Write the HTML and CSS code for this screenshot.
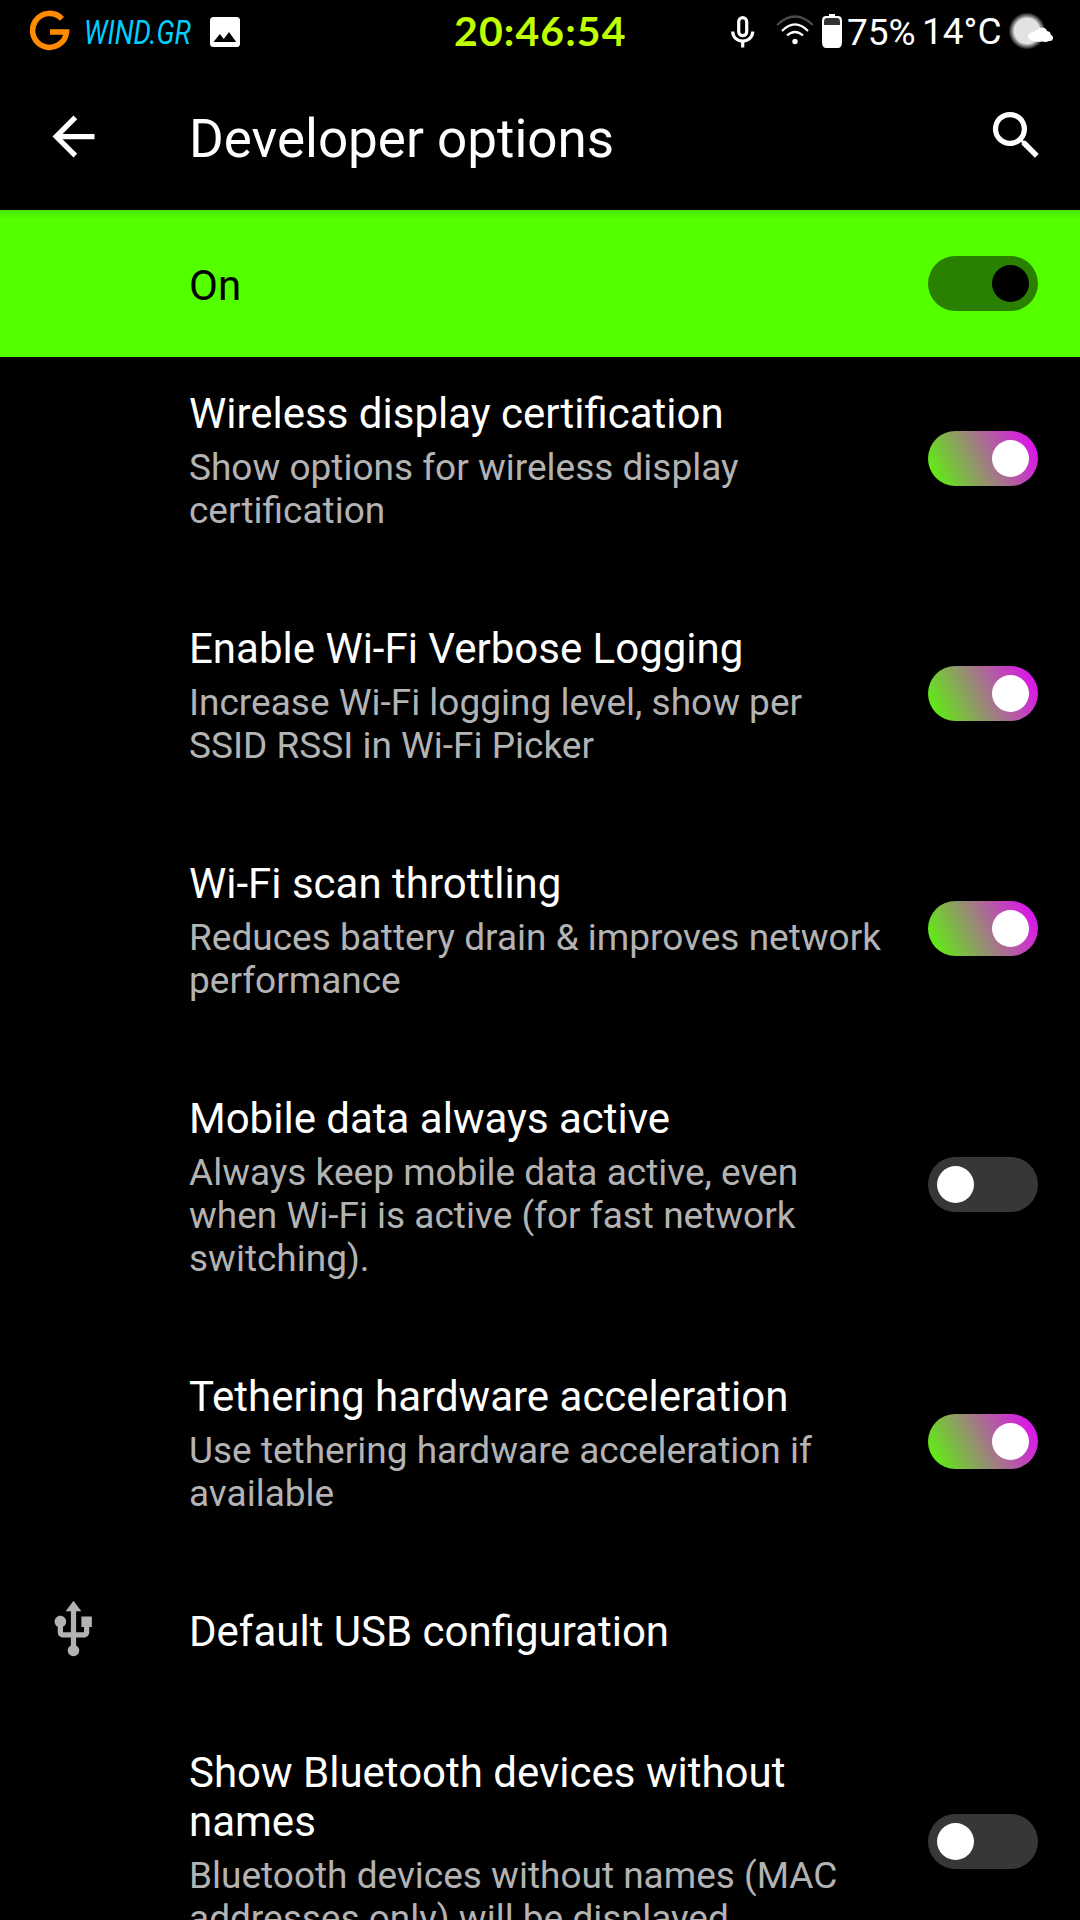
FILE: index.html
```html
<!DOCTYPE html>
<html lang="en">
<head>
<meta charset="utf-8">
<title>Developer options</title>
<link rel="stylesheet" href="styles.css">
</head>
<body>
<header class="status">
  <svg class="logo" width="40" height="42" viewBox="0 0 40 42"><path d="M32 8.8A17 17 0 1 0 36.5 22H20" fill="none" stroke="#ff8c00" stroke-width="5.6"/></svg>
  <span class="carrier">WIND.GR</span>
  <svg class="picture" width="30" height="30" viewBox="0 0 30 30"><rect width="30" height="30" rx="3.5" fill="#fff"/><path d="M3.5 25 9.8 17l4 5L19 15l7.2 10z" fill="#000"/></svg>
  <span class="clock">20:46:54</span>
  <svg class="mic" width="24" height="32" viewBox="0 0 24 32" fill="none" stroke="#fff" stroke-width="3.2"><rect x="7.7" y="1.7" width="8" height="18" rx="4"/><path d="M1.7 15.5c0 5.6 4.3 9.5 10 9.5s10-3.9 10-9.5M11.7 25v6.5"/></svg>
  <svg class="wifi" width="38" height="30" viewBox="0 0 38 30" fill="none" stroke="#fff" stroke-width="2.2"><path d="M1 10Q19-7 37 10" stroke="#4a4a4a"/><path d="M6 16q13-13 26 0M11 20.5q8-7 16 0"/><circle cx="19" cy="26.5" r="2.7" fill="#fff" stroke="none"/></svg>
  <svg class="battery" width="20" height="34" viewBox="0 0 20 34"><path d="M7 0h6v2h3q4 0 4 5v21q0 6-4.500 6h-11Q0 34 0 28V7q0-5 4-5h3z" fill="#fff"/><path d="M2 11V8q0-4 3-4h10q3 0 3 4v3z" fill="#333"/></svg>
  <span class="level">75%</span>
  <span class="temp">14°C</span>
  <svg class="weather" width="52" height="44" viewBox="0 0 52 44"><defs><radialGradient id="glow"><stop offset=".68" stop-color="#ddd"/><stop offset="1" stop-color="#000"/></radialGradient></defs><circle cx="20" cy="22" r="18.500" fill="url(#glow)"/><circle cx="20" cy="22" r="13" fill="#e2e2e2"/><path d="M25 31.500q-4-1-4-4.500 1-4 5.500-3.500 1-3 4-2.500 1-3 5-2.500 4 .5 4.500 3.500 4 .5 3.500 3.500 3 1.500 2.500 4-.5 3-4 2.500-3 1.500-7 .5-5 1-10-1z" fill="#fff"/></svg>
</header>
<nav class="toolbar">
  <svg class="icon back" viewBox="0 0 24 24"><path d="M20 11H7.830l5.590-5.590L12 4l-8 8 8 8 1.410-1.410L7.830 13H20z"/></svg>
  <h1>Developer options</h1>
  <svg class="icon search" viewBox="0 0 24 24"><path d="M15.500 14h-.79l-.28-.27A6.471 6.471 0 0 0 16 9.500 6.500 6.500 0 1 0 9.500 16c1.610 0 3.090-.59 4.230-1.570l.27.28v.79l5 4.990L20.490 19zm-6 0a4.500 4.500 0 1 1 0-9 4.500 4.500 0 0 1 0 9z"/></svg>
</nav>
<section class="master"><span>On</span><i class="switch inverse"></i></section>
<main>
  <section class="row"><div class="text"><h2>Wireless display certification</h2><p>Show options for wireless display certification</p></div><i class="switch on"></i></section>
  <section class="row"><div class="text"><h2>Enable Wi-Fi Verbose Logging</h2><p>Increase Wi-Fi logging level, show per SSID RSSI in Wi-Fi Picker</p></div><i class="switch on"></i></section>
  <section class="row"><div class="text"><h2>Wi-Fi scan throttling</h2><p>Reduces battery drain &amp; improves network performance</p></div><i class="switch on"></i></section>
  <section class="row"><div class="text"><h2>Mobile data always active</h2><p>Always keep mobile data active, even when Wi-Fi is active (for fast network switching).</p></div><i class="switch off"></i></section>
  <section class="row"><div class="text"><h2>Tethering hardware acceleration</h2><p>Use tethering hardware acceleration if available</p></div><i class="switch on"></i></section>
  <section class="row"><svg class="icon usb" viewBox="0 0 24 24"><path d="M15 7v4h1v2h-3V5h2l-3-4-3 4h2v8H8v-2.070c.7-.37 1.200-1.080 1.200-1.930 0-1.210-.99-2.200-2.200-2.200-1.210 0-2.200.99-2.200 2.200 0 .85.5 1.560 1.200 1.930V13c0 1.110.89 2 2 2h3v3.050c-.71.37-1.200 1.100-1.200 1.950a2.200 2.200 0 0 0 4.400 0c0-.85-.49-1.580-1.200-1.950V15h3c1.110 0 2-.89 2-2v-2h1V7z"/></svg><div class="text"><h2>Default USB configuration</h2></div></section>
  <section class="row"><div class="text"><h2>Show Bluetooth devices without names</h2><p>Bluetooth devices without names (MAC addresses only) will be displayed</p></div><i class="switch off"></i></section>
</main>
</body>
</html>
```
FILE: styles.css
```css
* { box-sizing: border-box; }
body { margin: 0; height: 1920px; overflow: hidden; background: #000; color: #fff; font-family: Roboto, sans-serif; display: flex; flex-direction: column; }
h1, h2, p { margin: 0; font-weight: 400; }
svg { flex: none; display: block; }
.status { height: 63px; flex: none; display: flex; align-items: flex-start; white-space: nowrap; }
.status span { flex: none; line-height: 44px; }
.logo { margin: 10px 0 0 30px; }
.carrier { width: 106px; margin: 11px 0 0 14px; font-size: 32.5px; font-style: italic; color: #00cfff; transform: scaleX(.84); transform-origin: left; }
.picture { margin: 17px 0 0 20px; }
.clock { width: 180px; margin: 9px 0 0 214px; font-family: Lato, sans-serif; font-size: 41px; font-weight: 700; letter-spacing: 1.1px; color: #bfff00; }
.mic { margin: 16px 0 0 97px; }
.wifi { margin: 15px 0 0 21px; }
.battery { margin: 14px 0 0 8px; }
.level, .temp { font-size: 37px; }
.level { width: 70px; margin: 11px 0 0 5px; }
.temp { width: 80px; margin: 10px 0 0 5px; }
.weather { margin: 9px 0 0 5px; }
.toolbar { height: 147px; flex: none; display: flex; align-items: center; padding: 0 32px 0 42px; }
.toolbar h1 { flex: 1; margin: 5px 0 0 84px; font-size: 53px; }
.icon { width: 63px; height: 63px; fill: #fff; flex: none; }
.search { margin-top: -2px; }
.master { height: 147px; flex: none; display: flex; align-items: center; justify-content: space-between; padding: 0 42px 0 189px; background: linear-gradient(#49e500, #54ff00 9px); color: #000; font-size: 42px; }
.master span { margin-top: 4px; }
.row { display: flex; align-items: center; padding: 32px 42px 60px 189px; }
.text { width: 697px; }
.row h2 { font-size: 42px; line-height: 49px; }
.row p { margin-top: 8px; font-size: 37px; line-height: 43px; color: #b3b3b3; }
.switch { width: 110px; height: 55px; flex: none; padding: 9px; border-radius: 28px; background: #373737; }
.switch::before { content: ""; display: block; width: 37px; height: 37px; border-radius: 50%; background: #fff; }
.row .switch { margin: -4px 0 0 auto; }
.row .off { margin-top: -6px; }
.on { background: linear-gradient(63deg, #55ff00, #e800ff); }
.on::before, .inverse::before { margin-left: 55px; }
.inverse { background: #2a8000; }
.inverse::before { background: #000; }
.usb { margin: -4px 84px 0 -147px; fill: #b3b3b3; }
.row:has(.usb) { height: 141px; }
```
